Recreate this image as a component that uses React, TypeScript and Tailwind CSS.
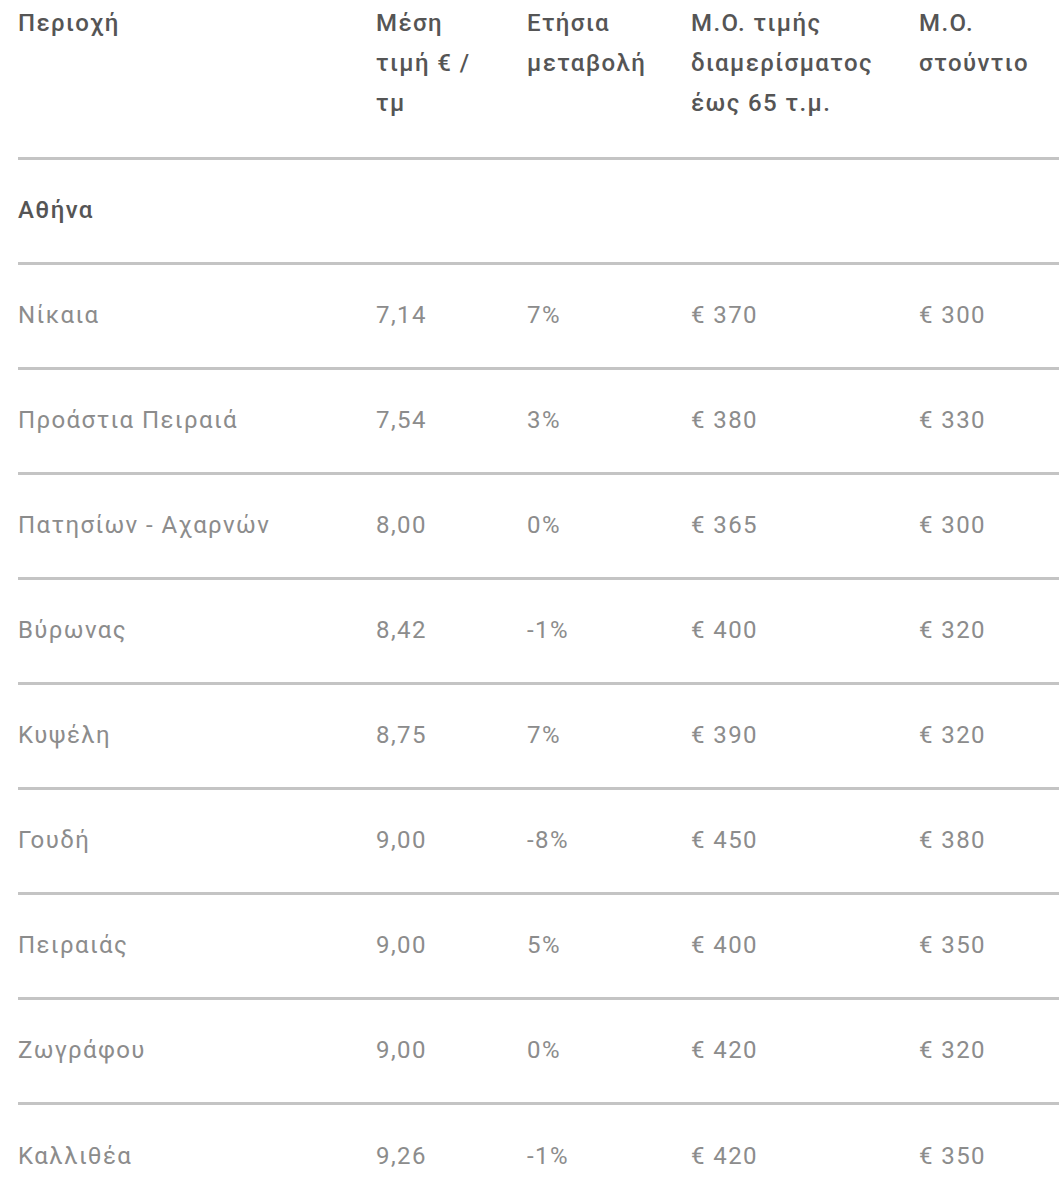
const rows = [
  ['Νίκαια', '7,14', '7%', '€ 370', '€ 300'],
  ['Προάστια Πειραιά', '7,54', '3%', '€ 380', '€ 330'],
  ['Πατησίων - Αχαρνών', '8,00', '0%', '€ 365', '€ 300'],
  ['Βύρωνας', '8,42', '-1%', '€ 400', '€ 320'],
  ['Κυψέλη', '8,75', '7%', '€ 390', '€ 320'],
  ['Γουδή', '9,00', '-8%', '€ 450', '€ 380'],
  ['Πειραιάς', '9,00', '5%', '€ 400', '€ 350'],
  ['Ζωγράφου', '9,00', '0%', '€ 420', '€ 320'],
  ['Καλλιθέα', '9,26', '-1%', '€ 420', '€ 350'],
];

const cols = 'grid grid-cols-[358px_151px_164px_228px_1fr]';

export default function App() {
  return (
    <div className="bg-white min-h-[1200px] pl-[18px] tracking-[1.4px] font-['Roboto','Noto_Sans',sans-serif]">
      <div className={`${cols} pt-[3px] pb-[34px] text-[24px] leading-[40px] font-medium text-[#555555] border-b-[3px] border-[#c4c4c4]`}>
        <div>Περιοχή</div>
        <div>
          Μέση
          <br />
          τιμή € /
          <br />
          τμ
        </div>
        <div>
          Ετήσια
          <br />
          μεταβολή
        </div>
        <div>
          Μ.Ο. τιμής
          <br />
          διαμερίσματος
          <br />
          έως 65 τ.μ.
        </div>
        <div>
          Μ.Ο.
          <br />
          στούντιο
        </div>
      </div>
      <div className="h-[105px] pb-[3px] flex items-center text-[24px] font-medium text-[#555555] border-b-[3px] border-[#c4c4c4]">
        Αθήνα
      </div>
      {rows.map((r, i) => (
        <div
          key={r[0]}
          className={`${cols} h-[105px] pb-[3px] items-center text-[24px] text-[#8c8c8c] ${
            i < rows.length - 1 ? 'border-b-[3px] border-[#c4c4c4]' : ''
          }`}
        >
          {r.map((c, j) => (
            <div key={j}>{c}</div>
          ))}
        </div>
      ))}
    </div>
  );
}
